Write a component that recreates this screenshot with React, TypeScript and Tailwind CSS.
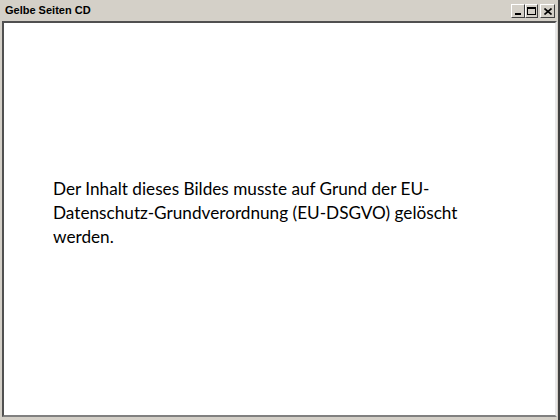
export default function App() {
  return (
    <div className="w-[560px] h-[420px] bg-[#d4d0c8] flex flex-col overflow-hidden border-r-2 border-r-[#404040]">
      <div className="h-[21px] flex items-center justify-between pl-[5px] pr-[3px] shrink-0">
        <span className="text-[11px] font-bold text-black leading-none" style={{ fontFamily: '"Liberation Sans", Arial, sans-serif' }}>Gelbe Seiten CD</span>
        <div className="flex items-center gap-0 mt-[1px]">
          <div className="w-[14px] h-[14px] bg-[#d4d0c8] border border-t-white border-l-white border-r-[#404040] border-b-[#404040] flex items-end justify-center pb-[2px]">
            <div className="w-[6px] h-[2px] bg-black" />
          </div>
          <div className="w-[13px] h-[14px] bg-[#d4d0c8] border border-t-white border-l-white border-r-[#404040] border-b-[#404040] flex items-center justify-center">
            <div className="w-[9px] h-[8px] border border-black border-t-2" />
          </div>
          <div className="w-[15px] h-[14px] ml-[2px] bg-[#d4d0c8] border border-t-white border-l-white border-r-[#404040] border-b-[#404040] flex items-center justify-center">
            <svg width="8" height="7" viewBox="0 0 8 7"><path d="M0.5 0.5 L7.5 6.5 M7.5 0.5 L0.5 6.5" stroke="black" strokeWidth="1.6" /></svg>
          </div>
        </div>
      </div>
      <div className="flex-1 ml-[2px] mr-[1px] mb-[3px] border-2 border-t-[#505050] border-l-[#505050] border-r-[#e8e8e8] border-b-[#808080] bg-white">
        <div className="pl-[49px] pt-[154px] pr-[20px]">
          <p className="text-[17.2px] leading-[24px] text-black" style={{ fontFamily: 'Lato, "Open Sans", sans-serif' }}>
            Der Inhalt dieses Bildes musste auf Grund der EU-<br />Datenschutz-Grundverordnung (EU-DSGVO) gelöscht<br />werden.
          </p>
        </div>
      </div>
    </div>
  );
}
